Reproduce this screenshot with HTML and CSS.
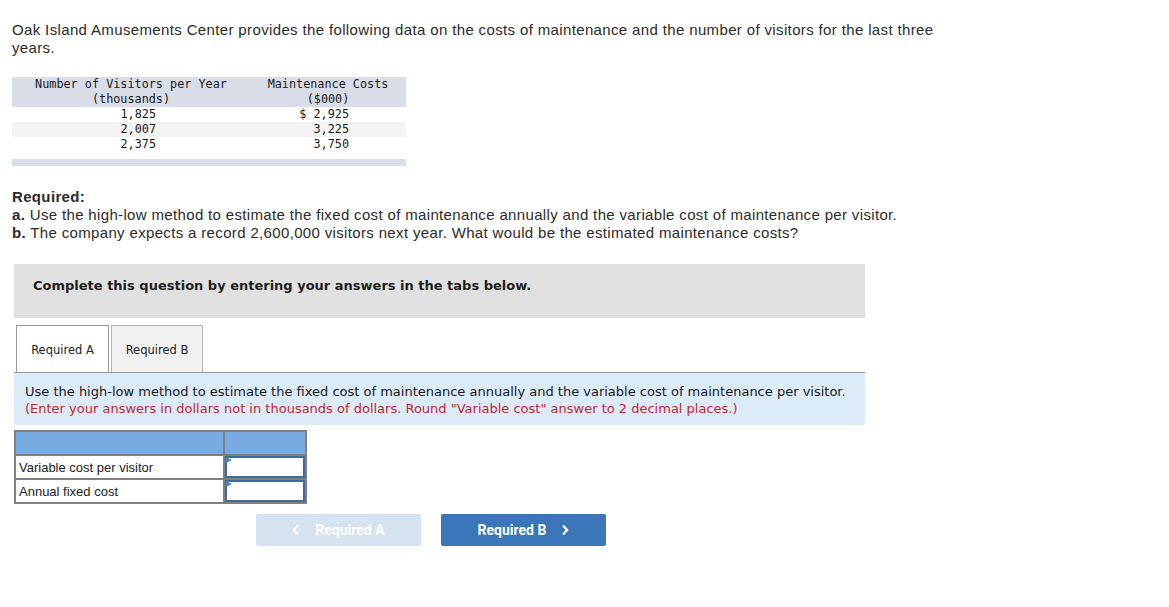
FILE: index.html
```html
<!DOCTYPE html>
<html>
<head>
<meta charset="utf-8">
<link rel="stylesheet" href="styles.css">
</head>
<body>
<div class="page">
  <p class="intro">Oak Island Amusements Center provides the following data on the costs of maintenance and the number of visitors for the last three years.</p>

  <div class="data">
    <div class="data-row head">
      <div class="c1">Number of Visitors per Year<br>(thousands)</div>
      <div class="c2">Maintenance Costs<br>($000)</div>
    </div>
    <div class="data-row">
      <div class="c1 num">1,825</div>
      <div class="c2 num">$ 2,925</div>
    </div>
    <div class="data-row alt">
      <div class="c1 num">2,007</div>
      <div class="c2 num">3,225</div>
    </div>
    <div class="data-row">
      <div class="c1 num">2,375</div>
      <div class="c2 num">3,750</div>
    </div>
    <div class="data-foot"></div>
  </div>

  <div class="required">
    <div class="req-title">Required:</div>
    <div><b>a.</b> Use the high-low method to estimate the fixed cost of maintenance annually and the variable cost of maintenance per visitor.</div>
    <div><b>b.</b> The company expects a record 2,600,000 visitors next year. What would be the estimated maintenance costs?</div>
  </div>

  <div class="notice">Complete this question by entering your answers in the tabs below.</div>

  <div class="tabs">
    <div class="tab active">Required A</div>
    <div class="tab">Required B</div>
  </div>

  <div class="instr">
    <div>Use the high-low method to estimate the fixed cost of maintenance annually and the variable cost of maintenance per visitor.</div>
    <div class="red">(Enter your answers in dollars not in thousands of dollars. Round "Variable cost" answer to 2 decimal places.)</div>
  </div>

  <table class="answer">
    <tr class="ahead"><td class="lab"></td><td class="val"></td></tr>
    <tr><td class="lab">Variable cost per visitor</td><td class="val"><div class="input"></div></td></tr>
    <tr><td class="lab">Annual fixed cost</td><td class="val"><div class="input"></div></td></tr>
  </table>

  <div class="nav">
    <div class="btn disabled"><svg class="chev left" width="8" height="12" viewBox="0 0 8 12"><path d="M6 1.5 L1.8 6 L6 10.5" fill="none" stroke="#fff" stroke-width="2.2"/></svg>Required A</div>
    <div class="btn primary">Required B<svg class="chev right" width="8" height="12" viewBox="0 0 8 12"><path d="M2 1.5 L6.2 6 L2 10.5" fill="none" stroke="#fff" stroke-width="2.2"/></svg></div>
  </div>
</div>
</body>
</html>
```

FILE: styles.css
```css
html, body {
  margin: 0;
  padding: 0;
  background: #fff;
}

.page {
  padding: 21px 0 0 12px;
  font-family: "Liberation Sans", Arial, sans-serif;
  color: #2b2b2b;
}

.intro {
  margin: 0;
  width: 950px;
  font-size: 15px;
  line-height: 18px;
  letter-spacing: 0.36px;
}

.data {
  margin-top: 20px;
  width: 394px;
  font-family: "DejaVu Sans Mono", "Liberation Mono", monospace;
  font-size: 11.8px;
  line-height: 15px;
  color: #1a1a1a;
}

.data-row {
  display: flex;
}

.data-row.head {
  background: #d9dde8;
}

.data-row.alt {
  background: #f3f3f3;
}

.c1 {
  width: 238px;
  text-align: center;
}

.c2 {
  width: 156px;
  text-align: center;
}

.c1.num {
  text-align: right;
  padding-right: 94px;
  width: 144px;
}

.c2.num {
  text-align: right;
  padding-right: 57px;
  width: 99px;
}

.data-foot {
  margin-top: 7px;
  height: 7px;
  background: #d9dde8;
}

.required {
  margin-top: 22px;
  font-size: 15px;
  line-height: 18px;
  letter-spacing: 0.345px;
}

.req-title {
  font-weight: bold;
}

.notice {
  margin-top: 22px;
  margin-left: 2px;
  width: 851px;
  height: 54px;
  box-sizing: border-box;
  padding: 14px 0 0 19px;
  background: #e0e0e0;
  font-family: "DejaVu Sans", Verdana, sans-serif;
  font-weight: bold;
  font-size: 13px;
  line-height: 16px;
  color: #1e1e1e;
}

.tabs {
  margin-top: 7px;
  margin-left: 2px;
  width: 851px;
  display: flex;
  gap: 2px;
  padding-left: 2px;
  box-sizing: border-box;
  border-bottom: 1px solid #999;
}

.tab {
  width: 92px;
  height: 47px;
  box-sizing: border-box;
  padding-top: 1px;
  border: 1px solid #b5b5b5;
  border-bottom: none;
  background: #f1f1f1;
  font-family: "DejaVu Sans", Verdana, sans-serif;
  font-size: 11.5px;
  color: #222;
  display: flex;
  align-items: center;
  justify-content: center;
}

.tab.active {
  width: 93px;
  background: #fff;
  border-color: #999;
}

.instr {
  margin-left: 2px;
  width: 851px;
  box-sizing: border-box;
  padding: 10px 11px 8px 11px;
  background: #dcebf8;
  font-family: "DejaVu Sans", Verdana, sans-serif;
  font-size: 13px;
  line-height: 17px;
  color: #1a1a1a;
}

.instr .red {
  color: #c0282d;
}

.answer {
  margin: 5px 0 0 2px;
  border-collapse: collapse;
  font-family: "Liberation Sans", Arial, sans-serif;
  font-size: 13px;
  color: #222;
}

.answer td {
  border: 2px solid #808080;
  padding: 0;
}

.answer .ahead td {
  background: #79abe2;
  height: 22px;
}

.answer .lab {
  width: 204px;
  height: 22px;
  padding-left: 3px;
}

.answer .val {
  width: 80px;
  height: 22px;
}

.input {
  height: 22px;
  border: 2px solid #3f6aa0;
  box-sizing: border-box;
  position: relative;
}

.input::before {
  content: "";
  position: absolute;
  left: -1px;
  top: -1px;
  border-left: 6px solid #4a86d0;
  border-top: 3px solid transparent;
  border-bottom: 3px solid transparent;
}

.nav {
  margin: 10px 0 0 244px;
  display: flex;
  gap: 20px;
}

.btn {
  width: 165px;
  height: 32px;
  border-radius: 2px;
  display: flex;
  align-items: center;
  justify-content: center;
  font-family: Roboto, "Liberation Sans", sans-serif;
  font-weight: bold;
  font-size: 14px;
  color: #fff;
}

.btn.disabled {
  background: #d6e2f0;
}

.btn.primary {
  background: #3a76b8;
}

.chev.left {
  margin-right: 15px;
}

.chev.right {
  margin-left: 15px;
}
```
